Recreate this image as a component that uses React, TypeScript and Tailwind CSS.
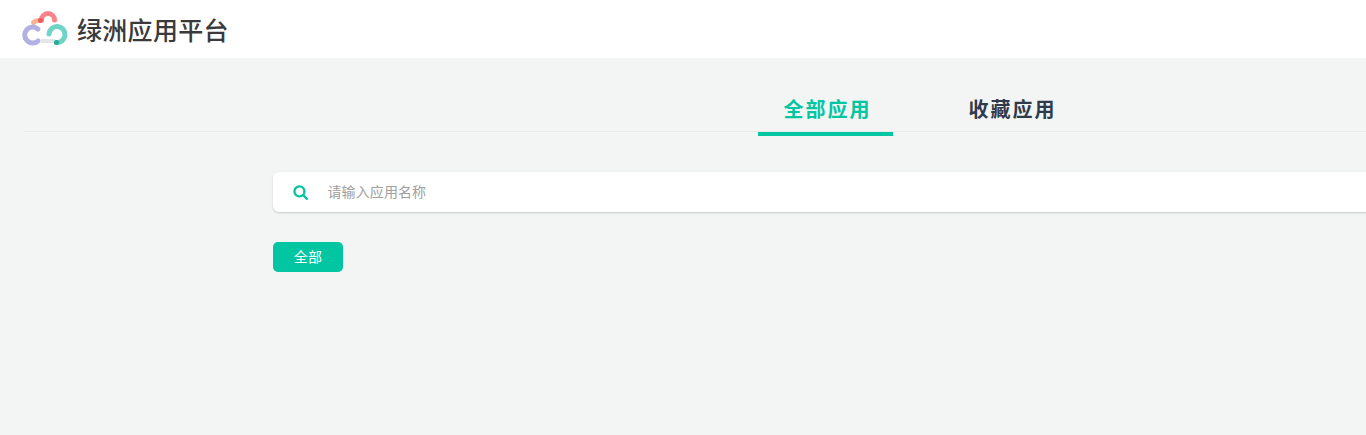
const cjk = "font-['Roboto','Noto_Sans_CJK_SC',sans-serif]";

function Logo() {
  return (
    <svg width="46" height="36" viewBox="0 0 46 36" fill="none" strokeLinecap="round" className="overflow-visible">
      <path d="M11.5 11.5A7 7 0 0 1 17 9.5" stroke="#f8b48f" strokeWidth="5" />
      <path d="M19.5 9A6.5 6.5 0 1 1 32.5 9" stroke="#f9838a" strokeWidth="5" />
      <circle cx="18.5" cy="9.5" r="2.5" fill="#ee5a5e" />
      <path d="M16 18A8 8 0 1 0 16 30" stroke="#b3b1e2" strokeWidth="5" />
      <path d="M19 30H33" stroke="#e4e6e6" strokeWidth="4" strokeLinecap="butt" />
      <path d="M27 23A8 8 0 1 1 34.5 31.5" stroke="#6fd3c5" strokeWidth="5" />
      <circle cx="34.5" cy="31.5" r="2.5" fill="#2ba99a" />
    </svg>
  );
}

export default function App() {
  return (
    <div className={`h-[435px] overflow-hidden bg-[#f3f5f5] ${cjk}`}>
      <header className="flex h-[58px] items-center bg-white pl-[22px]">
        <Logo />
        <span className="ml-[9px] mt-[5px] text-[25px] leading-none font-medium tracking-[0.3px] whitespace-nowrap text-[#3a3a3a]">
          绿洲应用平台
        </span>
      </header>

      <div className="ml-6 flex h-[74px] w-[1788px] items-end justify-center gap-[50px] border-b border-[#e9ebeb]">
        <div className="mb-[-5px] flex h-[52px] w-[135px] justify-center border-b-4 border-[#02c6a1] pl-1 pt-[11px] text-xl leading-[30px] font-bold tracking-[2px] text-[#02c6a1]">
          全部应用
        </div>
        <div className="mb-[-5px] flex h-[52px] w-[135px] justify-center pl-1 pt-[11px] text-xl leading-[30px] font-bold tracking-[2px] text-[#2f3a4c]">
          收藏应用
        </div>
      </div>

      <main className="ml-[273px] w-[1300px] pt-10">
        <div className="flex h-10 items-center rounded-md bg-white pl-[19px] shadow-[0_1px_2px_rgba(0,0,0,0.18)]">
          <svg width="17" height="17" viewBox="0 0 16 16" fill="none" stroke="#02c6a1" strokeWidth="2.2" strokeLinecap="round">
            <circle cx="7" cy="7" r="4.7" />
            <path d="M10.6 10.6 14 14" />
          </svg>
          <span className="ml-[18.5px] text-sm tracking-[0.1px] text-[#a0a0a0]">请输入应用名称</span>
        </div>
        <button className="mt-[30px] flex h-[30px] w-[70px] items-center justify-center rounded-[5px] bg-[#02c6a1] text-sm tracking-[0.3px] text-white">
          全部
        </button>
      </main>
    </div>
  );
}
